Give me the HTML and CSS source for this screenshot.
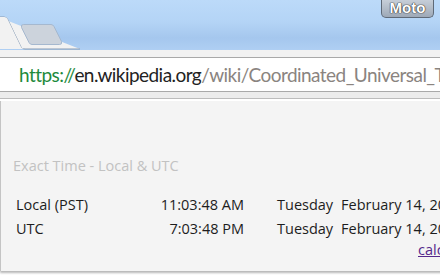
FILE: index.html
```html
<!DOCTYPE html>
<html lang="en">
<head>
    <meta charset="UTF-8">
    <meta name="viewport" content="width=device-width, initial-scale=1.0">
    <title>Exact Time</title>
    <link rel="stylesheet" href="styles.css">
</head>
<body>

    <div class="frame">
        <svg class="tabs" width="80" height="50" viewBox="0 0 80 50">
            <path d="M-2 17 H4 Q7 17 8 20 L21 47 Q22 49 25 49 H80" fill="#f2f2f2" stroke="#8a9db4" stroke-width="1"/>
            <path d="M-2 17 H4 Q7 17 8 20 L21 47 Q22 49 25 49 H-2 Z" fill="#f2f2f2"/>
            <path d="M23.5 24.5 H51 Q53 24.5 54 26.5 L61.5 41.5 Q62.5 44.5 59.5 44.5 H32 Q30 44.5 29 42.5 L21.5 27.5 Q20.5 24.5 23.5 24.5 Z" fill="#ccd3dc" stroke="#a5b8cf" stroke-width="1"/>
        </svg>
        <div class="moto">Moto</div>
    </div>

    <div class="toolbar"></div>
    <div class="omnibox">
        <span class="divider"></span>
        <span class="url"><span class="scheme">https://</span><span class="host">en.wikipedia.org</span>/wiki/Coordinated_Universal_Time</span>
    </div>
    <div class="strip"></div>

    <div class="page">
        <div class="page-edge"></div>
        <div class="popup">
            <div class="title">Exact Time - Local &amp; UTC</div>
            <div class="times">
                <span>Local (PST)</span><span class="clock">11:03:48 AM</span><span class="day">Tuesday</span><span>February 14, 2012</span>
                <span>UTC</span><span class="clock">7:03:48 PM</span><span class="day">Tuesday</span><span>February 14, 2012</span>
            </div>
            <div class="more"><a href="#">calculator</a></div>
        </div>
    </div>

</body>
</html>
```

FILE: styles.css
```css
body { margin: 0; width: 440px; height: 280px; overflow: hidden; background: #ffffff; font-family: "Open Sans", "Noto Sans", sans-serif; }
.frame { height: 50px; display: flex; justify-content: space-between; align-items: flex-start; background: linear-gradient(#bcdaf9 0, #b4d4f6 22px, #a5c7ee 38px, #afcff3 50px); }
.tabs { display: block; }
.moto { margin-right: 6px; width: 53px; height: 18px; box-sizing: border-box; border: 1px solid #5f6a78; border-top: none; border-radius: 0 0 5px 5px; background: linear-gradient(#c6ced8, #9ea9b7); color: #ffffff; font: bold 15px "Liberation Sans", sans-serif; text-align: center; line-height: 16px; text-shadow: 0 0 1px #333, 0 0 1px #333, 0 0 1px #333; }
.toolbar { height: 7px; background: #f2f2f2; }
.omnibox { height: 33px; display: flex; align-items: center; background: #ffffff; border-top: 1px solid #a9a9a9; border-bottom: 1px solid #a9a9a9; white-space: nowrap; overflow: hidden; }
.divider { width: 1px; height: 18px; margin: 0 11px 0 8px; background: #b5b5b5; }
.url { font-family: Lato, "Open Sans", sans-serif; font-size: 19px; letter-spacing: -0.55px; color: #8a8480; }
.scheme { color: #1e8a3c; }
.host { color: #222222; }
.strip { height: 6px; background: #ececec; border-bottom: 1px solid #bcbcbc; border-top: 0; }
.page { display: flex; height: 182px; }
.page-edge { width: 2px; height: 172px; background: linear-gradient(#1a1a1a 0, #1a1a1a 3px, #e08a20 3px, #e08a20 5px, #2a50c0 5px, #2a50c0 7px, #ffffff 7px, #ffffff 20px, #555 20px, #555 22px, #ffffff 22px, #ffffff 30px, #333 30px, #333 32px, #ffffff 32px); }
.popup { width: 560px; height: 170px; margin-top: 2px; background: #f4f4f4; border-left: 1px solid #c4c4c4; box-shadow: 0 2px 2px #b8b8b8; font-size: 14.5px; color: #1d1d1d; }
.title { padding: 55px 0 0 12px; color: #c2c2c2; height: 22px; }
.times { display: grid; grid-template-columns: 120px 108px 97px 1fr; row-gap: 4px; padding: 17px 0 0 15px; line-height: 20px; white-space: nowrap; }
.clock { text-align: right; }
.day { padding-left: 33px; color: #1d1d1d; }
.more { padding: 1px 0 0 417px; line-height: 20px; }
.more a { color: #55288c; }
```
